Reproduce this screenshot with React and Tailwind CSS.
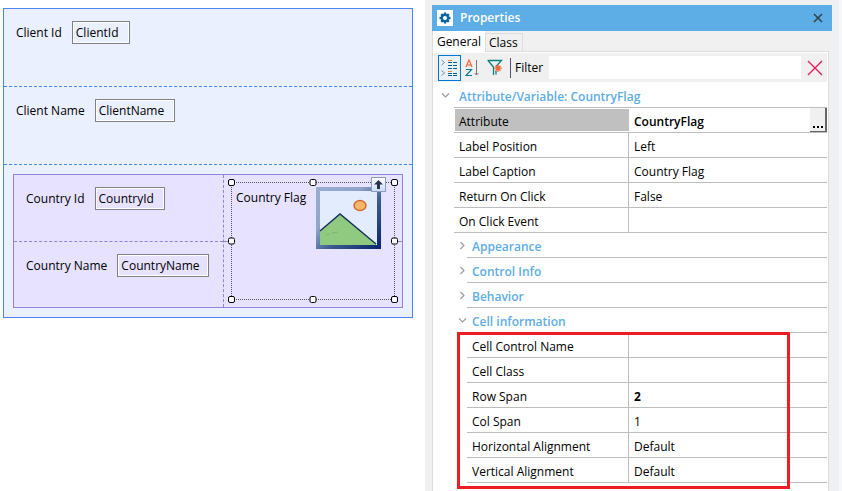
import React from 'react';

const HANDLES = [
  '-left-1 -top-1',
  'left-1/2 -translate-x-1/2 -top-1',
  '-right-1 -top-1',
  '-left-1 top-1/2 -translate-y-1/2',
  '-right-1 top-1/2 -translate-y-1/2',
  '-left-1 -bottom-1',
  'left-1/2 -translate-x-1/2 -bottom-1',
  '-right-1 -bottom-1',
];

const ATTRIBUTE_ROWS = [
  { name: 'Label Position', value: 'Left' },
  { name: 'Label Caption', value: 'Country Flag' },
  { name: 'Return On Click', value: 'False' },
  { name: 'On Click Event', value: '' },
];

const CELL_ROWS = [
  { name: 'Cell Control Name', value: '' },
  { name: 'Cell Class', value: '' },
  { name: 'Row Span', value: '2', bold: true },
  { name: 'Col Span', value: '1' },
  { name: 'Horizontal Alignment', value: 'Default' },
  { name: 'Vertical Alignment', value: 'Default' },
];

function Field({ id, label, value, width }) {
  return (
    <div className="flex items-center gap-2.5 pl-3 pt-3">
      <label htmlFor={id} className="whitespace-nowrap">{label}</label>
      <input
        id={id}
        defaultValue={value}
        className={`h-[23px] border border-[#808080] bg-transparent px-[3px] outline-none inset-ring inset-ring-white ${width}`}
      />
    </div>
  );
}

function FlagPicture() {
  return (
    <svg width="65" height="62" viewBox="0 0 65 62" role="img" aria-label="Country Flag">
      <defs>
        <linearGradient id="frame" x1="0" y1="0" x2="1" y2="1">
          <stop offset="0" stopColor="#9aaed0" />
          <stop offset="0.35" stopColor="#8fa4c8" />
          <stop offset="0.6" stopColor="#3a5a94" />
          <stop offset="1" stopColor="#06246b" />
        </linearGradient>
      </defs>
      <rect width="65" height="62" fill="url(#frame)" />
      <rect x="4" y="4" width="57" height="54" fill="#e2ecfc" />
      <path d="M4 44L24 27L60 57V58H4Z" fill="#8fca80" />
      <path d="M4 44L24 27L60 57" fill="none" stroke="#14305c" strokeWidth="1.4" />
      <path d="M10 48l3-1M16 46l6-1" stroke="#79b96c" strokeWidth="1" />
      <ellipse cx="44" cy="18.500" rx="6" ry="5" fill="#f9b568" stroke="#d3672f" strokeWidth="1.400" />
    </svg>
  );
}

function Designer() {
  return (
    <main className="ml-[3px] mt-2 w-[410px] shrink-0 self-start border border-[#4a86f0] bg-[#ebf0ff]">
      <div className="h-[78px] border-b border-dashed border-[#4a86f0]">
        <Field id="clientId" label="Client Id" value="ClientId" width="w-[58px]" />
      </div>
      <div className="h-[78px] border-b border-dashed border-[#4a86f0]">
        <Field id="clientName" label="Client Name" value="ClientName" width="w-20" />
      </div>
      <div className="p-[9px]">
        <div className="grid h-[134px] grid-cols-[210px_1fr] border border-[#8f82d8] bg-[#e7e2ff]">
          <div className="flex flex-col border-r border-dashed border-[#8f82d8]">
            <div className="h-[67px] border-b border-dashed border-[#8f82d8]">
              <Field id="countryId" label="Country Id" value="CountryId" width="w-[70px]" />
            </div>
            <Field id="countryName" label="Country Name" value="CountryName" width="w-[92px]" />
          </div>
          <div className="flex items-stretch bg-[linear-gradient(#8f82d8,#8f82d8)] bg-[length:100%_1px] bg-[position:0_66px] bg-no-repeat p-[7px]">
            <div className="relative flex grow items-start gap-2.5 border border-dotted border-[#55555f] bg-[#e7e2ff] pl-1 pt-1">
              <span className="whitespace-nowrap pt-[3px]">Country Flag</span>
              <FlagPicture />
              {HANDLES.map((place) => (
                <span key={place} className={`absolute size-[7px] rounded-[2px] border border-black bg-white ${place}`} />
              ))}
              <button aria-label="Select parent" className="absolute -top-1.5 right-2 flex size-[15px] items-center justify-center border border-[#8a9cc0] bg-gradient-to-b from-white to-[#cddcf5]">
                <svg width="9" height="9" viewBox="0 0 9 9"><path d="M4.500 0L9 4.500H6V9H3V4.500H0Z" fill="#27344f" /></svg>
              </button>
            </div>
          </div>
        </div>
      </div>
    </main>
  );
}

function Chevron({ open }) {
  return (
    <svg width="9" height="9" viewBox="0 0 9 9" fill="none" stroke="#9a9aa4" strokeWidth="1.100" className="shrink-0">
      <path d={open ? 'M1 2.500L4.500 6L8 2.500' : 'M2.500 1L6 4.500L2.500 8'} />
    </svg>
  );
}

function Section({ title, open, gap = 'gap-0' }) {
  return (
    <button aria-expanded={!!open} className={`flex h-[25px] w-full items-center text-left font-semibold text-[#5dade6] ${gap}`}>
      <Chevron open={open} />
      <span className="flex h-full grow items-center border-b border-[#bdbdbd] pl-[5px] pt-[3px]">{title}</span>
    </button>
  );
}

function Row({ name, value, bold, labelWidth }) {
  const id = name.replaceAll(' ', '-');
  return (
    <div className="flex h-[25px] border-b border-[#bdbdbd]">
      <label htmlFor={id} className={`flex shrink-0 items-center whitespace-nowrap border-r border-[#bdbdbd] pl-[5px] pt-[3px] ${labelWidth}`}>{name}</label>
      <input id={id} defaultValue={value} className={`w-full min-w-0 bg-transparent pl-[5px] pt-[3px] outline-none ${bold ? 'font-bold' : ''}`} />
    </div>
  );
}

function Toolbar() {
  return (
    <div className="flex h-[29px] items-center bg-[#f0f0f0] px-1">
      <button aria-label="Categorized" className="flex h-[26px] w-[23px] items-center justify-center border border-[#0078d7] bg-[#e9f1f8]">
        <svg width="17" height="18" viewBox="0 0 17 18" fill="none">
          <path d="M0.500 1l3 2.500l-3 2.500M0.500 11.500l3 2.500l-3 2.500" stroke="#888" />
          <path d="M7 3.500h4M12 3.500h4M7 6.500h4M12 6.500h4M7 9.500h4M12 9.500h4M7 14.500h4M7 16.500h4M12 14.500h4M12 16.500h4" stroke="#075f91" />
          <path d="M7 1.500h4M7 12.500h4" stroke="#f08a3b" />
        </svg>
      </button>
      <button aria-label="Sort alphabetically" className="ml-1 flex h-6 w-4 items-center">
        <svg width="14" height="18" viewBox="0 0 14 18" fill="none">
          <path d="M1 8L4 1L7 8M2 6h4" stroke="#f26535" strokeWidth="1.200" />
          <path d="M1 10.500h5.500L1 16.500h6" stroke="#087c91" strokeWidth="1.200" />
          <path d="M11.500 1v15M9.500 14l2 2l2-2" stroke="#777" />
        </svg>
      </button>
      <button aria-label="Show modified" className="ml-1.5 flex h-6 w-4 items-center">
        <svg width="16" height="17" viewBox="0 0 16 17" fill="none">
          <path d="M0.500 1.500h14L9 7.500M1 1.500L6.500 8v8M9 12v3.500" stroke="#078080" strokeWidth="1.300" />
          <path d="M11 5.500v7.500M7.200 9.200h7.600M8.500 6.700l5 5M13.500 6.700l-5 5" stroke="#f26535" strokeWidth="1.300" />
        </svg>
      </button>
      <span className="ml-[7px] h-5 w-px bg-[#50507a]" />
      <label htmlFor="filter" className="ml-1 w-[34px]">Filter</label>
      <input id="filter" className="h-[23px] min-w-0 grow bg-white px-1 outline-none" />
      <button aria-label="Clear filter" className="ml-1.5">
        <svg width="16" height="16" viewBox="0 0 16 16"><path d="M1 1L15 15M15 1L1 15" stroke="#e41c5c" strokeWidth="1.400" /></svg>
      </button>
    </div>
  );
}

function Properties() {
  return (
    <aside className="ml-3 grow border-r-[3px] border-[#f6f7fc] bg-[#f0f0f0] pl-[7px] pr-[7px] pt-[5px]">
      <header className="flex h-[26px] items-center bg-[#5dade6] pl-[5px] pr-[9px] font-semibold text-white">
        <svg width="16" height="16" viewBox="0 0 16 16">
          <rect width="16" height="16" fill="#fff" />
          <path d="M8 2.500v11M2.500 8h11M4.200 4.200l7.600 7.600M11.800 4.200l-7.600 7.600" stroke="#0a66a0" strokeWidth="2.400" />
          <circle cx="8" cy="8" r="4.200" fill="#0a66a0" />
          <circle cx="8" cy="8" r="2.100" fill="#fff" />
        </svg>
        <h1 className="grow pl-[7px]">Properties</h1>
        <button aria-label="Close">
          <svg width="10" height="10" viewBox="0 0 10 10"><path d="M1 1L9 9M9 1L1 9" stroke="#34424c" strokeWidth="1.600" /></svg>
        </button>
      </header>
      <div role="tablist" className="flex items-end">
        <button role="tab" aria-selected="true" className="relative z-10 -mb-px h-[21px] w-[53px] border-l border-[#dcdcdc] bg-white">General</button>
        <button role="tab" aria-selected="false" className="h-[18px] w-[38px] border border-b-0 border-[#dcdcdc] pl-[3px] text-left">Class</button>
      </div>
      <div className="mr-[3px] h-[440px] border border-b-0 border-[#dcdcdc] bg-white px-px pt-px">
        <Toolbar />
        <div className="relative pl-[7px] pt-px">
          <Section title="Attribute/Variable: CountryFlag" open gap="gap-1" />
          <div className="pl-[13px]">
            <div className="flex h-[25px] border-b border-[#bdbdbd]">
              <label htmlFor="attribute" className="my-px ml-px flex w-[174px] shrink-0 items-center bg-[#c0c0c0] pl-1 pt-[3px]">Attribute</label>
              <input id="attribute" defaultValue="CountryFlag" className="min-w-0 grow bg-transparent pl-[5px] pt-[3px] font-semibold outline-none" />
              <button aria-label="Browse" className="flex w-[17px] items-end justify-center gap-[2px] border-b border-r-2 border-[#666] bg-[#f0f0f0] pb-[3px]">
                <i className="size-[2px] bg-black" /><i className="size-[2px] bg-black" /><i className="size-[2px] bg-black" />
              </button>
            </div>
            {ATTRIBUTE_ROWS.map((row) => <Row key={row.name} {...row} labelWidth="w-[175px]" />)}
          </div>
          <div className="pl-[17px]">
            <Section title="Appearance" />
            <Section title="Control Info" />
            <Section title="Behavior" />
            <Section title="Cell information" open />
            <div className="relative pl-[9px]">
              {CELL_ROWS.map((row) => <Row key={row.name} {...row} labelWidth="w-[162px]" />)}
              <div className="pointer-events-none absolute -left-px -top-px bottom-[-6px] right-[37px] border-3 border-[#ee1c25]" />
            </div>
          </div>
        </div>
      </div>
    </aside>
  );
}

export default function App() {
  return (
    <div className="flex h-screen overflow-hidden bg-white font-['Open_Sans','Noto_Sans',sans-serif] text-[12px] leading-4 text-black">
      <Designer />
      <Properties />
    </div>
  );
}
